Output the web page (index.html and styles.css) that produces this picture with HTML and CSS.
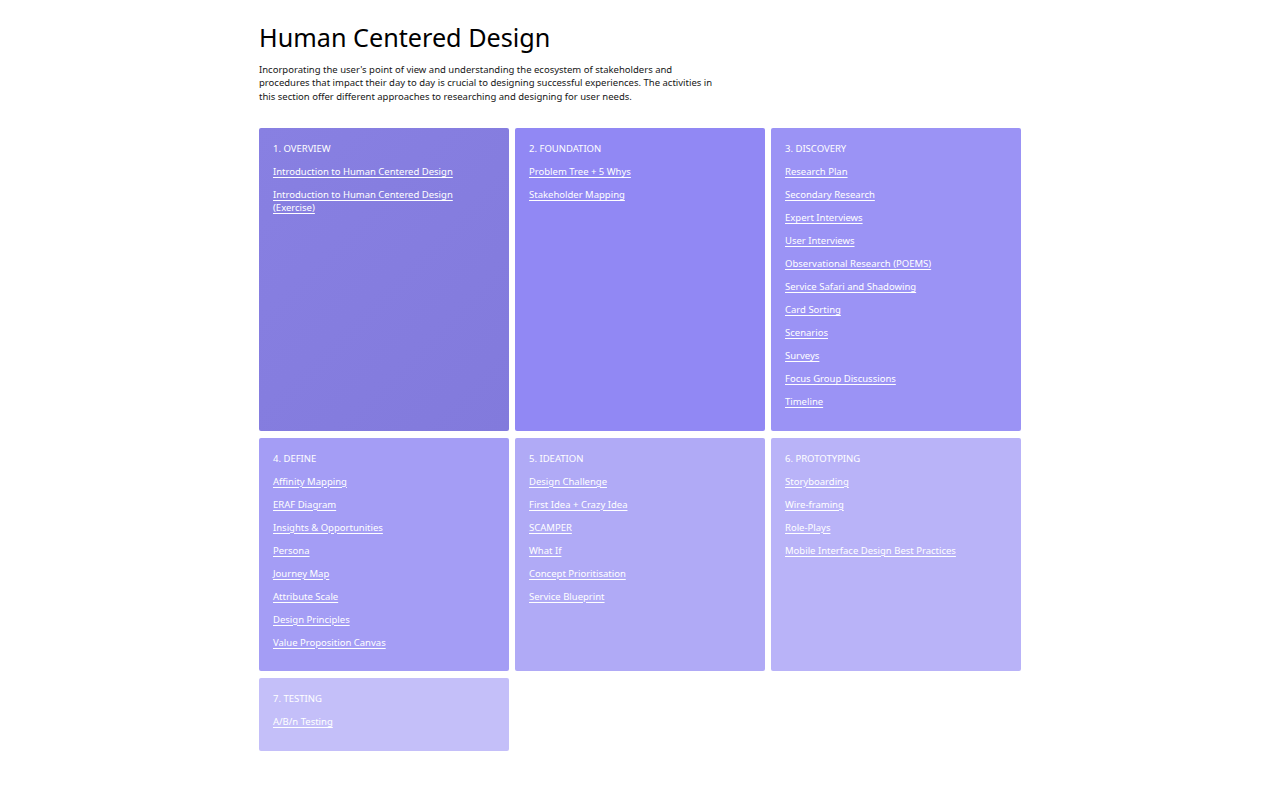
FILE: index.html
```html
<!DOCTYPE html>
<html lang="en">
<head>
<meta charset="utf-8">
<title>Human Centered Design</title>
<link rel="stylesheet" href="styles.css">
</head>
<body>
<main class="page">
  <h1 class="title">Human Centered Design</h1>
  <p class="intro">Incorporating the user's point of view and understanding the ecosystem of stakeholders and procedures that impact their day to day is crucial to designing successful experiences. The activities in this section offer different approaches to researching and designing for user needs.</p>
  <div class="grid">
    <section class="card c1">
      <h2 class="card-title">1. OVERVIEW</h2>
      <ul class="links">
        <li><a href="#">Introduction to Human Centered Design</a></li>
        <li><a href="#">Introduction to Human Centered Design (Exercise)</a></li>
      </ul>
    </section>
    <section class="card c2">
      <h2 class="card-title">2. FOUNDATION</h2>
      <ul class="links">
        <li><a href="#">Problem Tree + 5 Whys</a></li>
        <li><a href="#">Stakeholder Mapping</a></li>
      </ul>
    </section>
    <section class="card c3">
      <h2 class="card-title">3. DISCOVERY</h2>
      <ul class="links">
        <li><a href="#">Research Plan</a></li>
        <li><a href="#">Secondary Research</a></li>
        <li><a href="#">Expert Interviews</a></li>
        <li><a href="#">User Interviews</a></li>
        <li><a href="#">Observational Research (POEMS)</a></li>
        <li><a href="#">Service Safari and Shadowing</a></li>
        <li><a href="#">Card Sorting</a></li>
        <li><a href="#">Scenarios</a></li>
        <li><a href="#">Surveys</a></li>
        <li><a href="#">Focus Group Discussions</a></li>
        <li><a href="#">Timeline</a></li>
      </ul>
    </section>
    <section class="card c4">
      <h2 class="card-title">4. DEFINE</h2>
      <ul class="links">
        <li><a href="#">Affinity Mapping</a></li>
        <li><a href="#">ERAF Diagram</a></li>
        <li><a href="#">Insights &amp; Opportunities</a></li>
        <li><a href="#">Persona</a></li>
        <li><a href="#">Journey Map</a></li>
        <li><a href="#">Attribute Scale</a></li>
        <li><a href="#">Design Principles</a></li>
        <li><a href="#">Value Proposition Canvas</a></li>
      </ul>
    </section>
    <section class="card c5">
      <h2 class="card-title">5. IDEATION</h2>
      <ul class="links">
        <li><a href="#">Design Challenge</a></li>
        <li><a href="#">First Idea + Crazy Idea</a></li>
        <li><a href="#">SCAMPER</a></li>
        <li><a href="#">What If</a></li>
        <li><a href="#">Concept Prioritisation</a></li>
        <li><a href="#">Service Blueprint</a></li>
      </ul>
    </section>
    <section class="card c6">
      <h2 class="card-title">6. PROTOTYPING</h2>
      <ul class="links">
        <li><a href="#">Storyboarding</a></li>
        <li><a href="#">Wire-framing</a></li>
        <li><a href="#">Role-Plays</a></li>
        <li><a href="#">Mobile Interface Design Best Practices</a></li>
      </ul>
    </section>
    <section class="card c7">
      <h2 class="card-title">7. TESTING</h2>
      <ul class="links">
        <li><a href="#">A/B/n Testing</a></li>
      </ul>
    </section>
  </div>
</main>
</body>
</html>
```
FILE: styles.css
```css
html, body {
  margin: 0;
  padding: 0;
  background: #ffffff;
}
body {
  font-family: "Noto Sans", "Liberation Sans", sans-serif;
  color: #161616;
}
.page {
  width: 762px;
  margin: 0 auto;
  padding-top: 20px;
}
.title {
  margin: 0;
  font-size: 25.2px;
  font-weight: 400;
  line-height: 34px;
  color: #000;
}
.intro {
  margin: 9px 0 0;
  width: 460px;
  font-size: 9.5px;
  line-height: 13.4px;
  color: #161616;
}
.grid {
  margin-top: 25px;
  display: grid;
  grid-template-columns: repeat(3, 250px);
  column-gap: 6px;
  row-gap: 7px;
}
.card {
  border-radius: 2px;
  padding: 14px 14px 12.5px;
  color: #fff;
}
.c1 { background: linear-gradient(135deg, #8880e2, #827adc); }
.c2 { background: #9188f4; }
.c3 { background: #9b93f5; }
.c4 { background: #a49df5; }
.c5 { background: #b0aaf6; }
.c6 { background: #b9b3f8; }
.c7 { background: #c4bff9; }
.card-title {
  margin: 0 0 10px;
  font-size: 9.5px;
  font-weight: 400;
  line-height: 13px;
}
.links {
  list-style: none;
  margin: 0;
  padding: 0;
}
.links li {
  margin: 0 0 10px;
  font-size: 9.5px;
  font-weight: 400;
  line-height: 13px;
  width: 200px;
}
.links a {
  color: #fff;
  text-decoration: underline;
  text-underline-offset: 2px;
}
```
